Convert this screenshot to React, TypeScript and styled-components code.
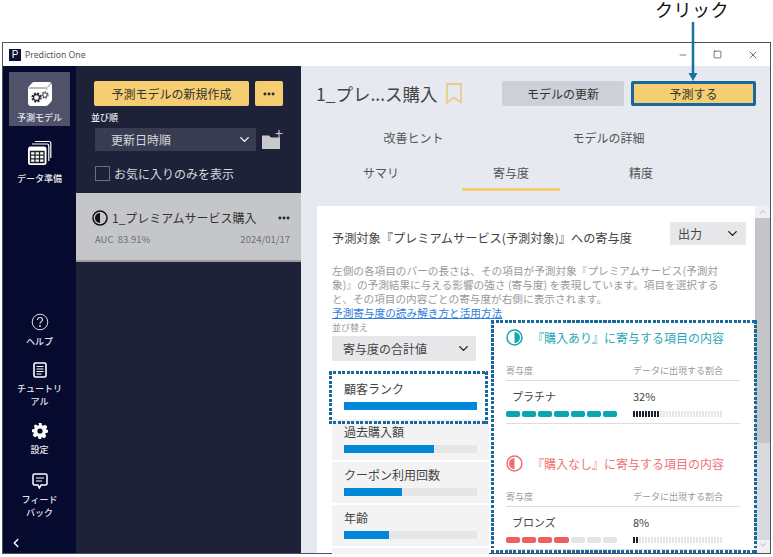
import React from "react";
import styled, { createGlobalStyle, css } from "styled-components";
import { ChevronDown, ChevronLeft, ChevronUp, Minus, Square, X, Ellipsis } from "lucide-react";

const GlobalStyle = createGlobalStyle`
  html, body {
    margin: 0;
    padding: 0;
    background: #fff;
    overflow: hidden;
  }
  * { box-sizing: border-box; }
  body {
    font-family: "Noto Sans CJK JP", "Noto Sans", sans-serif;
    color: #333;
  }
`;

const items = [
  { name: "過去購入額", value: 68 },
  { name: "クーポン利用回数", value: 43.6 },
  { name: "年齢", value: 33.6 },
];

const CubeIcon = () => (
  <svg width="26" height="26" viewBox="0 0 26 26">
    <path d="M7 1h15c1.700 0 3 1.300 3 3v14.500c0 1-.4 1.800-1 2.500l-3 3c-.6.600-1.400 1-2.300 1H4c-1.700 0-3-1.300-3-3V7.500c0-.9.300-1.600 1-2.300L5 2c.5-.6 1.200-1 2-1z" fill="#fff" />
    <path d="M2 7h16.500c1 0 1.500.5 1.500 1.500M20 6.500l4.500-4.500" fill="none" stroke="#50526a" strokeWidth=".8" />
    <circle cx="9.500" cy="16.500" r="4.300" fill="none" stroke="#2a2a35" strokeWidth="1.600" strokeDasharray="2 1.400" />
    <circle cx="9.500" cy="16.500" r="3" fill="none" stroke="#2a2a35" strokeWidth="1.300" />
    <circle cx="18" cy="14" r="3" fill="none" stroke="#44444f" strokeWidth="1.300" strokeDasharray="1.600 1.100" />
    <circle cx="18" cy="14" r="2.100" fill="none" stroke="#44444f" strokeWidth=".9" />
  </svg>
);

const TableIcon = () => (
  <svg width="26" height="26" viewBox="0 0 26 26">
    <path d="M8 1.500h14c1 0 1.800.8 1.800 1.800V18" fill="none" stroke="#fff" strokeWidth="1.200" />
    <path d="M5 4h15c1 0 1.800.8 1.800 1.800V21" fill="none" stroke="#fff" strokeWidth="1.200" />
    <rect x="1" y="6.500" width="18.500" height="18.500" rx="2.500" fill="#fff" />
    <path d="M3.500 11.500h13.500v11H3.500zM3.500 15.200h13.500M3.500 18.900h13.500M8 11.500v11M12.500 11.500v11" fill="none" stroke="#222" strokeWidth="1.300" />
  </svg>
);

const HelpIcon = () => (
  <svg width="18" height="18" viewBox="0 0 18 18" fill="none" stroke="#d8d8de">
    <circle cx="9" cy="9" r="7.800" strokeWidth="1" />
    <path d="M6.500 7c0-1.600 1.100-2.500 2.500-2.500s2.500.9 2.500 2.200c0 1.900-2.500 2-2.500 4" strokeWidth="1.200" />
    <circle cx="9" cy="13" r=".6" fill="#d8d8de" />
  </svg>
);

const DocIcon = () => (
  <svg width="14" height="16" viewBox="0 0 14 16">
    <rect x="1" y="1" width="12" height="14" rx="1.500" fill="none" stroke="#fff" strokeWidth="1.600" />
    <path d="M3.500 4.500h7M3.500 7h7M3.500 9.500h7M3.500 12h5" stroke="#fff" strokeWidth="1" />
  </svg>
);

const GearIcon = () => (
  <svg width="16" height="16" viewBox="0 0 16 16">
    <path
      fill="#fff"
      fillRule="evenodd"
      d="M6.500 0h3l.4 2.200 1.200.6L13.200 1.700l2.100 2.100-1.100 2.100.6 1.300L16 6.500v3l-2.200.4-.6 1.200 1.100 2.100-2.100 2.100-2.100-1.100-1.200.6L9.500 16h-3l-.4-2.200-1.200-.6-2.100 1.100-2.100-2.100 1.100-2.100-.6-1.200L0 9.500v-3l2.200-.4.600-1.300-1.100-2.100L3.800 1.600l2.100 1.100 1.200-.6L6.500 0zM8 5.400a2.600 2.600 0 1 0 0 5.200 2.600 2.600 0 0 0 0-5.200z"
    />
  </svg>
);

const FeedbackIcon = () => (
  <svg width="16" height="16" viewBox="0 0 16 16" fill="none">
    <path d="M2.500 1h11A1.500 1.500 0 0 1 15 2.500v8a1.500 1.500 0 0 1-1.500 1.500H9l-1.500 3L6 12H2.500A1.500 1.500 0 0 1 1 10.500v-8A1.500 1.500 0 0 1 2.500 1z" stroke="#fff" strokeWidth="1.500" />
    <path d="M4 5h8M4 8h6" stroke="#fff" strokeWidth="1.200" />
  </svg>
);

const HalfCircle = ({ color, side, size }: { color: string; side: "left" | "right"; size: number }) => {
  const r = size / 2;
  const inner = r - 3;
  const d =
    side === "left"
      ? `M${r} ${r - inner}A${inner} ${inner} 0 0 0 ${r} ${r + inner}Z`
      : `M${r} ${r - inner}A${inner} ${inner} 0 0 1 ${r} ${r + inner}Z`;
  return (
    <svg width={size} height={size} viewBox={`0 0 ${size} ${size}`}>
      <circle cx={r} cy={r} r={r - 1} fill="none" stroke={color} strokeWidth="1.500" />
      <path d={d} fill={color} />
    </svg>
  );
};

const App = () => {
  return (
    <Page>
      <GlobalStyle />
      <ClickLabel>クリック</ClickLabel>
      <Arrow width="10" height="59" viewBox="0 0 10 59">
        <path d="M5 0v52" stroke="#1a6fa3" strokeWidth="2.500" />
        <path d="M0.500 51h9L5 59z" fill="#1a6fa3" />
      </Arrow>
      <Window>
        <TitleBar>
          <AppLogo>P</AppLogo>
          <AppName>Prediction One</AppName>
          <WinButtons>
            <WinCell><Minus size={10} strokeWidth={1.4} /></WinCell>
            <WinCell><Square size={9} strokeWidth={1.6} /></WinCell>
            <WinCell><X size={12} strokeWidth={1.3} /></WinCell>
          </WinButtons>
        </TitleBar>
        <Main>
          <Sidebar>
            <NavItem $active>
              <CubeIcon />
              <NavLabel>予測モデル</NavLabel>
            </NavItem>
            <NavItem $gap={6}>
              <TableIcon />
              <NavLabel>データ準備</NavLabel>
            </NavItem>
            <NavBottom>
              <SmallNav>
                <HelpIcon />
                <NavLabel>ヘルプ</NavLabel>
              </SmallNav>
              <SmallNav $after={1}>
                <DocIcon />
                <NavLabel>チュートリ<br />アル</NavLabel>
              </SmallNav>
              <SmallNav $after={3}>
                <GearIcon />
                <NavLabel>設定</NavLabel>
              </SmallNav>
              <SmallNav>
                <FeedbackIcon />
                <NavLabel>フィード<br />バック</NavLabel>
              </SmallNav>
              <Collapse>
                <ChevronLeft size={14} strokeWidth={2.5} color="#fff" />
              </Collapse>
            </NavBottom>
          </Sidebar>

          <ModelPanel>
            <PanelTop>
              <CreateRow>
                <CreateButton>予測モデルの新規作成</CreateButton>
                <DotsButton>
                  <Ellipsis size={14} strokeWidth={3} />
                </DotsButton>
              </CreateRow>
              <SortLabel>並び順</SortLabel>
              <SortRow>
                <SortSelect>
                  更新日時順
                  <ChevronDown size={15} strokeWidth={2.2} color="#fff" />
                </SortSelect>
                <FolderIcon width="22" height="20" viewBox="0 0 22 20">
                  <path d="M1 5.500h7l2 2h9V19H1z" fill="#c9c9cc" />
                  <path d="M18 0v8M14.500 3.500h7" stroke="#c9c9cc" strokeWidth="1.200" />
                </FolderIcon>
              </SortRow>
              <FavRow>
                <FavBox />
                お気に入りのみを表示
              </FavRow>
            </PanelTop>
            <ModelCard>
              <ModelName>
                <HalfCircle color="#111" side="left" size={16} />
                <span>1_プレミアムサービス購入</span>
                <Ellipsis size={14} strokeWidth={3} color="#222" />
              </ModelName>
              <ModelMeta>
                <span>AUC&nbsp; 83.91%</span>
                <span>2024/01/17</span>
              </ModelMeta>
            </ModelCard>
          </ModelPanel>

          <Content>
            <ContentHead>
              <ModelTitle>1_プレ...ス購入</ModelTitle>
              <BookmarkIcon width="16" height="21" viewBox="0 0 16 21">
                <path d="M1 1h14v18.500l-7-5-7 5z" fill="none" stroke="#eccb85" strokeWidth="1.800" />
              </BookmarkIcon>
              <UpdateButton>モデルの更新</UpdateButton>
              <PredictButton>予測する</PredictButton>
            </ContentHead>
            <TabRow $top>
              <Tab>改善ヒント</Tab>
              <Tab>モデルの詳細</Tab>
            </TabRow>
            <TabRow>
              <Tab>サマリ</Tab>
              <Tab $active>寄与度</Tab>
              <Tab>精度</Tab>
            </TabRow>

            <CardArea>
              <Card>
                <CardHead>
                  <CardTitle>予測対象『プレミアムサービス(予測対象)』への寄与度</CardTitle>
                  <OutputSelect>
                    出力
                    <ChevronDown size={15} strokeWidth={2.2} color="#222" />
                  </OutputSelect>
                </CardHead>
                <Description>
                  左側の各項目のバーの長さは、その項目が予測対象『プレミアムサービス(予測対
                  <br />
                  象)』の予測結果に与える影響の強さ (寄与度) を表現しています。項目を選択する
                  <br />
                  と、その項目の内容ごとの寄与度が右側に表示されます。
                </Description>
                <HelpLink>予測寄与度の読み解き方と活用方法</HelpLink>
                <Columns>
                  <LeftColumn>
                    <SmallLabel>並び替え</SmallLabel>
                    <OrderSelect>
                      寄与度の合計値
                      <ChevronDown size={15} strokeWidth={2.2} color="#222" />
                    </OrderSelect>
                    <ItemList>
                      <Item $selected>
                        <ItemName>顧客ランク</ItemName>
                        <Track>
                          <Fill style={{ width: "100%" }} />
                        </Track>
                      </Item>
                      {items.map((item) => (
                        <Item key={item.name}>
                          <ItemName>{item.name}</ItemName>
                          <Track>
                            <Fill style={{ width: `${item.value}%` }} />
                          </Track>
                        </Item>
                      ))}
                      <ItemStub />
                    </ItemList>
                  </LeftColumn>
                  <DetailBox>
                    <DetailHead $color="#2ba8b8">
                      <HalfCircle color="#16a5b5" side="right" size={17} />
                      『購入あり』に寄与する項目の内容
                    </DetailHead>
                    <DetailTable>
                      <TableHead>
                        <span>寄与度</span>
                        <span>データに出現する割合</span>
                      </TableHead>
                      <TableRow>
                        <div>
                          <RowName>プラチナ</RowName>
                          <Segments>
                            {[0, 1, 2, 3, 4, 5, 6].map((i) => (
                              <Segment key={i} $color="#0aa6b0" />
                            ))}
                          </Segments>
                        </div>
                        <div>
                          <Percent>32%</Percent>
                          <Ticks>
                            {Array.from({ length: 30 }, (_, i) => (
                              <Tick key={i} $on={i < 9} />
                            ))}
                          </Ticks>
                        </div>
                      </TableRow>
                    </DetailTable>
                    <DetailHead $color="#ee7474" $second>
                      <HalfCircle color="#ee7070" side="left" size={17} />
                      『購入なし』に寄与する項目の内容
                    </DetailHead>
                    <DetailTable>
                      <TableHead>
                        <span>寄与度</span>
                        <span>データに出現する割合</span>
                      </TableHead>
                      <TableRow>
                        <div>
                          <RowName>ブロンズ</RowName>
                          <Segments>
                            {[0, 1, 2, 3, 4, 5, 6].map((i) => (
                              <Segment key={i} $color={i < 4 ? "#ee5f60" : "#e4e4e4"} />
                            ))}
                          </Segments>
                        </div>
                        <div>
                          <Percent>8%</Percent>
                          <Ticks>
                            {Array.from({ length: 30 }, (_, i) => (
                              <Tick key={i} $on={i < 2} />
                            ))}
                          </Ticks>
                        </div>
                      </TableRow>
                    </DetailTable>
                  </DetailBox>
                </Columns>
              </Card>
              <Scrollbar>
                <ChevronUp size={10} color="#aaa" />
                <ScrollThumb />
                <ScrollSpace />
                <ChevronDown size={10} color="#aaa" />
              </Scrollbar>
            </CardArea>
          </Content>
        </Main>
      </Window>
    </Page>
  );
};

export default App;

// square dotted outline, the browser's "dotted" draws round dots
const dottedFrame = css`
  background:
    repeating-linear-gradient(90deg, #17699c 0 3px, transparent 3px 4.5px) top / 100% 3px no-repeat,
    repeating-linear-gradient(90deg, #17699c 0 3px, transparent 3px 4.5px) bottom / 100% 3px no-repeat,
    repeating-linear-gradient(0deg, #17699c 0 3px, transparent 3px 4.5px) left / 3px 100% no-repeat,
    repeating-linear-gradient(0deg, #17699c 0 3px, transparent 3px 4.5px) right / 3px 100% no-repeat;
`;

const Page = styled.div`
  position: relative;
  width: 773px;
  height: 557px;
  padding: 42px 2px 3px 2px;
  overflow: hidden;
`;
const ClickLabel = styled.div`
  position: absolute;
  left: 655px;
  top: 0;
  font-size: 18px;
  line-height: 18px;
  letter-spacing: 0.5px;
  color: #111;
`;
const Arrow = styled.svg`
  position: absolute;
  left: 688px;
  top: 22px;
  z-index: 5;
`;
const Window = styled.div`
  height: 100%;
  border: 1px solid #47535f;
  display: flex;
  flex-direction: column;
  background: #fff;
`;
const TitleBar = styled.div`
  height: 23px;
  flex: none;
  display: flex;
  align-items: center;
  padding-left: 6px;
  background: #fff;
`;
const AppLogo = styled.div`
  width: 12px;
  height: 12px;
  background: #0c1030;
  color: #fff;
  font: 10px/12px "Liberation Sans", sans-serif;
  text-align: center;
`;
const AppName = styled.div`
  margin-left: 4px;
  font-family: "Noto Sans", sans-serif;
  font-size: 8.700px;
  color: #555;
`;
const WinButtons = styled.div`
  margin-left: auto;
  display: flex;
  color: #222;
`;
const WinCell = styled.div`
  width: 35px;
  display: flex;
  justify-content: center;
  align-items: center;
`;
const Main = styled.div`
  flex: 1;
  min-height: 0;
  display: flex;
`;
const Sidebar = styled.div`
  width: 73px;
  flex: none;
  background: #050a2e;
  padding: 6px 6px 0;
  display: flex;
  flex-direction: column;
`;
const NavItem = styled.div<{ $active?: boolean; $gap?: number }>`
  height: 54px;
  margin-bottom: 7px;
  background: ${(p) => (p.$active ? "#50526a" : "transparent")};
  display: flex;
  flex-direction: column;
  align-items: center;
  justify-content: flex-end;
  padding-bottom: 2px;
  gap: ${(p) => p.$gap ?? 4}px;
`;
const NavLabel = styled.div`
  font-size: 9px;
  font-weight: 500;
  line-height: 13px;
  color: #e4e4ea;
  text-align: center;
`;
const NavBottom = styled.div`
  margin-top: auto;
  display: flex;
  flex-direction: column;
  align-items: center;
  gap: 14px;
`;
const SmallNav = styled.div<{ $after?: number }>`
  display: flex;
  flex-direction: column;
  align-items: center;
  gap: 4px;
  width: 60px;
  margin-bottom: ${(p) => p.$after ?? 0}px;
`;
const Collapse = styled.div`
  align-self: flex-start;
  margin: -2px 0 6px 0;
  height: 16px;
`;
const ModelPanel = styled.div`
  width: 225px;
  flex: none;
  background: #1e2238;
`;
const PanelTop = styled.div`
  padding: 15px 18px 0 18px;
  height: 127px;
`;
const CreateRow = styled.div`
  display: flex;
  gap: 6px;
`;
const CreateButton = styled.div`
  width: 155px;
  height: 25px;
  background: #f5ce72;
  border-radius: 2px;
  font-size: 12px;
  line-height: 25px;
  text-align: center;
  color: #333;
`;
const DotsButton = styled.div`
  width: 28px;
  height: 25px;
  background: #f5ce72;
  border-radius: 2px;
  display: flex;
  align-items: center;
  justify-content: center;
  color: #222;
`;
const SortLabel = styled.div`
  margin: 5px 0 0 -3px;
  font-size: 9px;
  font-weight: 500;
  line-height: 14px;
  color: #e8e8ee;
`;
const SortRow = styled.div`
  margin: 3px 0 0 1px;
  display: flex;
  align-items: center;
  gap: 5px;
`;
const SortSelect = styled.div`
  width: 161px;
  height: 23px;
  background: #383c50;
  padding: 0 4px 0 16px;
  display: flex;
  align-items: center;
  justify-content: space-between;
  font-size: 12px;
  color: #d8d8de;
`;
const FolderIcon = styled.svg`
  flex: none;
`;
const FavRow = styled.div`
  margin: 14px 0 0 1px;
  height: 16px;
  display: flex;
  align-items: center;
  gap: 4px;
  font-size: 12px;
  color: #d8d8de;
`;
const FavBox = styled.div`
  width: 15px;
  height: 15px;
  border: 1.500px solid #6b6e80;
`;
const ModelCard = styled.div`
  height: 69px;
  background: #c4c6c9;
  border-bottom: 2px solid #9b9da3;
  padding: 16px 10px 0 16px;
`;
const ModelName = styled.div`
  display: flex;
  align-items: center;
  font-size: 12px;
  line-height: 18px;
  color: #333;
  span {
    flex: 1;
    margin-left: 4px;
  }
`;
const ModelMeta = styled.div`
  display: flex;
  justify-content: space-between;
  margin-top: 5px;
  padding: 0 1px 0 3px;
  font-size: 9.500px;
  line-height: 14px;
  color: #6e6f74;
`;
const Content = styled.div`
  flex: 1;
  min-width: 0;
  background: #e6e9ef;
  padding-top: 15px;
  display: flex;
  flex-direction: column;
`;
const ContentHead = styled.div`
  display: flex;
  align-items: center;
  padding: 0 14px 0 15px;
  height: 25px;
`;
const ModelTitle = styled.div`
  font-size: 17.500px;
  color: #444;
  white-space: nowrap;
`;
const BookmarkIcon = styled.svg`
  margin-left: 8px;
  flex: none;
`;
const UpdateButton = styled.div`
  margin-left: auto;
  width: 122px;
  height: 25px;
  background: #cdd0d8;
  border-radius: 2px;
  font-size: 12px;
  line-height: 25px;
  text-align: center;
  color: #333;
`;
const PredictButton = styled.div`
  margin-left: 7px;
  width: 125px;
  height: 25px;
  background: #f5ce72;
  border: 3px solid #17699c;
  border-radius: 2px;
  font-size: 12px;
  line-height: 19px;
  text-align: center;
  color: #333;
`;
const TabRow = styled.div<{ $top?: boolean }>`
  display: flex;
  width: 390px;
  margin-left: 15px;
  height: ${(p) => (p.$top ? "35px" : "36px")};
  margin-top: ${(p) => (p.$top ? "19px" : "0")};
`;
const Tab = styled.div<{ $active?: boolean }>`
  flex: 1;
  margin: 0 16px;
  text-align: center;
  font-size: 12px;
  line-height: 26px;
  height: 31px;
  color: #555;
  border-bottom: 3px solid ${(p) => (p.$active ? "#f5ce72" : "transparent")};
`;
const CardArea = styled.div`
  flex: 1;
  min-height: 0;
  display: flex;
  margin: 10px 0 0 16px;
`;
const Card = styled.div`
  flex: 1;
  min-width: 0;
  background: #fff;
  padding: 16px 0 0 15px;
`;
const CardHead = styled.div`
  display: flex;
  align-items: flex-start;
  justify-content: space-between;
  padding-right: 9px;
`;
const CardTitle = styled.div`
  margin-top: 6px;
  font-size: 12.200px;
  line-height: 20px;
  color: #444;
`;
const OutputSelect = styled.div`
  width: 76px;
  height: 23px;
  background: #e7e7ea;
  display: flex;
  align-items: center;
  justify-content: space-between;
  padding: 0 6px 0 8px;
  font-size: 12px;
  color: #444;
`;
const Description = styled.div`
  margin-top: 16px;
  font-size: 10.650px;
  line-height: 14px;
  color: #9a9a9a;
  white-space: nowrap;
`;
const HelpLink = styled.div`
  font-size: 10.650px;
  line-height: 14px;
  color: #2f7ed8;
  text-decoration: underline;
`;
const Columns = styled.div`
  display: flex;
  align-items: flex-start;
`;
const LeftColumn = styled.div`
  width: 159px;
  flex: none;
`;
const SmallLabel = styled.div`
  font-size: 9px;
  line-height: 13px;
  margin-top: 1px;
  color: #999;
`;
const OrderSelect = styled.div`
  width: 144px;
  height: 25px;
  margin-top: 2px;
  background: #e7e7ea;
  display: flex;
  align-items: center;
  justify-content: space-between;
  padding: 0 5px 0 11px;
  font-size: 12px;
  color: #444;
`;
const ItemList = styled.div`
  margin-top: 15px;
  padding-right: 2px;
`;
const Item = styled.div<{ $selected?: boolean }>`
  position: relative;
  height: 41px;
  margin-bottom: 2px;
  background: ${(p) => (p.$selected ? "#fff" : "#f3f3f3")};
  padding: 0 12px;
  ${(p) =>
    p.$selected &&
    css`
      z-index: 1;
      &::after {
        content: "";
        position: absolute;
        inset: -5px 1px -7px -3px;
        ${dottedFrame}
      }
    `}
`;
const ItemStub = styled.div`
  height: 6px;
  background: #f3f3f3;
`;
const ItemName = styled.div`
  font-size: 12px;
  line-height: 18px;
  height: 26px;
  padding-top: 4px;
  color: #444;
`;
const Track = styled.div`
  height: 8px;
  background: #e6e6e6;
`;
const Fill = styled.div`
  height: 100%;
  background: #0088d6;
`;
const DetailBox = styled.div`
  position: relative;
  z-index: 1;
  width: 266px;
  height: 233px;
  flex: none;
  ${dottedFrame}
  padding: 7px 17px 0 15px;
`;
const DetailHead = styled.div<{ $color: string; $second?: boolean }>`
  display: flex;
  align-items: center;
  gap: 9px;
  height: 20px;
  margin-top: ${(p) => (p.$second ? "29px" : "0")};
  font-size: 12px;
  color: ${(p) => p.$color};
  white-space: nowrap;
`;
const DetailTable = styled.div`
  margin-top: 16px;
`;
const TableHead = styled.div`
  display: grid;
  grid-template-columns: 127px 1fr;
  font-size: 9px;
  line-height: 16px;
  color: #999;
  padding-bottom: 1px;
  border-bottom: 1px solid #ddd;
`;
const TableRow = styled.div`
  display: grid;
  grid-template-columns: 127px 1fr;
  height: 43px;
  border-bottom: 1px solid #ddd;
`;
const RowName = styled.div`
  font-size: 11px;
  line-height: 16px;
  margin: 7px 0 7px 6px;
  color: #444;
`;
const Percent = styled.div`
  font-size: 11px;
  line-height: 16px;
  margin: 7px 0;
  color: #444;
`;
const Segments = styled.div`
  display: flex;
  gap: 2px;
  width: 111px;
`;
const Segment = styled.div<{ $color: string }>`
  flex: 1;
  height: 6px;
  border-radius: 2px;
  background: ${(p) => p.$color};
`;
const Ticks = styled.div`
  display: flex;
  gap: 1px;
  width: 91px;
`;
const Tick = styled.div<{ $on: boolean }>`
  width: 2px;
  height: 6px;
  background: ${(p) => (p.$on ? "#1c2230" : "#e6e6e6")};
`;
const Scrollbar = styled.div`
  width: 15px;
  flex: none;
  background: #eef0f3;
  display: flex;
  flex-direction: column;
  align-items: center;
  padding: 1px 0 3px;
`;
const ScrollThumb = styled.div`
  width: 100%;
  height: 225px;
  margin-top: 1px;
  background: #c3c5c9;
`;
const ScrollSpace = styled.div`
  flex: 1;
  width: 100%;
  background: #d8dadf;
`;
